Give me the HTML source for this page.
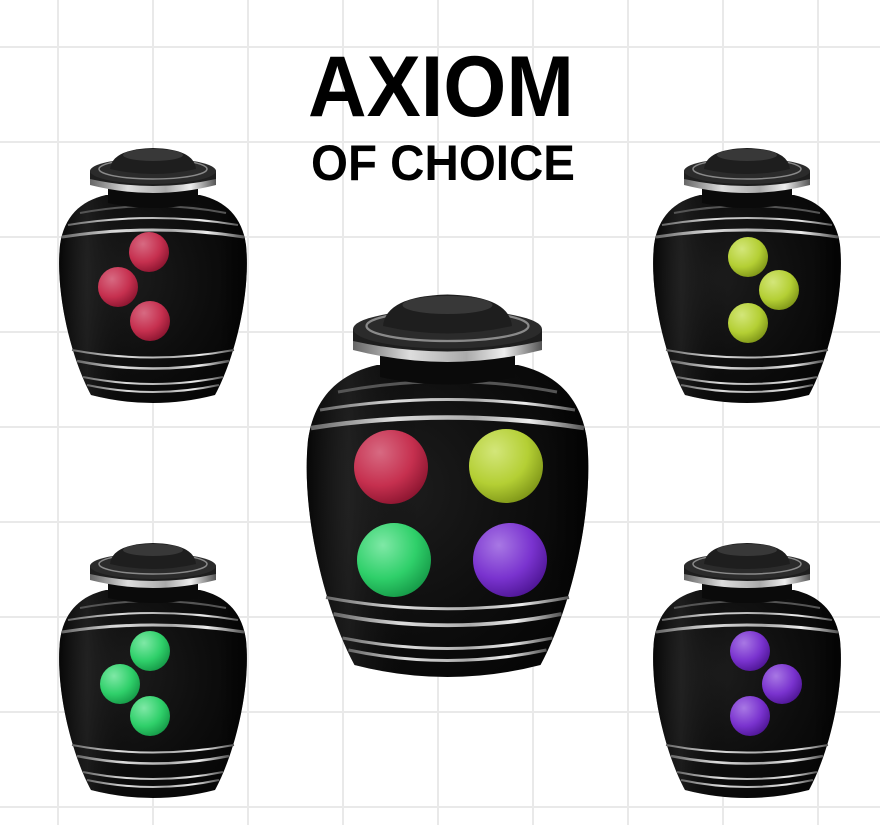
<!DOCTYPE html>
<html><head><style>
html,body{margin:0;padding:0;background:#fff;}
svg{display:block}
</style></head><body>
<svg width="880" height="825" viewBox="0 0 880 825" xmlns="http://www.w3.org/2000/svg">
<defs>
<radialGradient id="body" cx="0.35" cy="0.4" r="0.75">
<stop offset="0" stop-color="#1c1c1c"/><stop offset="0.6" stop-color="#0d0d0d"/><stop offset="1" stop-color="#050505"/>
</radialGradient>
<linearGradient id="bodyh" x1="0" x2="1" y1="0" y2="0">
<stop offset="0" stop-color="#000" stop-opacity="0.6"/><stop offset="0.15" stop-color="#333" stop-opacity="0.4"/><stop offset="0.4" stop-color="#000" stop-opacity="0"/><stop offset="0.85" stop-color="#000" stop-opacity="0"/><stop offset="1" stop-color="#000" stop-opacity="0.6"/>
</linearGradient>
<linearGradient id="silver" x1="0" x2="1">
<stop offset="0" stop-color="#666"/><stop offset="0.3" stop-color="#ddd"/><stop offset="0.6" stop-color="#aaa"/><stop offset="0.8" stop-color="#eee"/><stop offset="1" stop-color="#555"/>
</linearGradient>
<radialGradient id="red" cx="0.35" cy="0.3" r="0.75"><stop offset="0" stop-color="#d76a82"/><stop offset="0.6" stop-color="#c6304f"/><stop offset="1" stop-color="#8c1530"/></radialGradient>
<radialGradient id="yel" cx="0.35" cy="0.3" r="0.75"><stop offset="0" stop-color="#d3e67a"/><stop offset="0.6" stop-color="#b4cf34"/><stop offset="1" stop-color="#7f9618"/></radialGradient>
<radialGradient id="grn" cx="0.35" cy="0.3" r="0.75"><stop offset="0" stop-color="#7fe8a6"/><stop offset="0.6" stop-color="#2fd06a"/><stop offset="1" stop-color="#169a48"/></radialGradient>
<radialGradient id="pur" cx="0.35" cy="0.3" r="0.75"><stop offset="0" stop-color="#a878e4"/><stop offset="0.6" stop-color="#7a33cf"/><stop offset="1" stop-color="#4f1696"/></radialGradient>
<path id="bshape" d="M48 50 C22 56 6 72 2 100 C-3 150 14 215 33 250 Q95 266 157 250 C176 215 193 150 188 100 C184 72 168 56 142 50 Z"/>
<g id="urn">
<use href="#bshape" fill="url(#body)"/>
<use href="#bshape" fill="url(#bodyh)"/>
<g fill="none" stroke="url(#silver)" stroke-width="2">
<path d="M22 68 Q95 54 168 68" stroke="#555"/>
<path d="M10 80 Q95 66 180 80"/>
<path d="M4 92 Q95 78 186 92" stroke-width="3"/>
<path d="M14 205 Q95 220 176 205"/>
<path d="M19 216 Q95 231 171 216" stroke-width="2.5"/>
<path d="M25 232 Q95 246 165 232"/>
<path d="M29 240 Q95 254 161 240"/>
</g>
<path d="M50 40 L50 58 Q95 68 140 58 L140 40 Z" fill="#0a0a0a"/>
<path d="M32 30 L32 40 Q95 56 158 40 L158 30 Z" fill="url(#silver)"/>
<path d="M32 26 L32 34 Q95 48 158 34 L158 26 Z" fill="#1e1e1e"/>
<ellipse cx="95" cy="26" rx="63" ry="13" fill="#2b2b2b"/>
<ellipse cx="95" cy="24" rx="54" ry="10" fill="none" stroke="#8a8a8a" stroke-width="1.5"/>
<path d="M52 24 Q54 4 95 3 Q136 4 138 24 Q95 34 52 24 Z" fill="#1e1e1e"/>
<ellipse cx="95" cy="10" rx="30" ry="6" fill="#383838"/>
</g>
</defs>
<g stroke="#e9e9e9" stroke-width="2">
<line x1="58" y1="0" x2="58" y2="825"/><line x1="153" y1="0" x2="153" y2="825"/><line x1="248" y1="0" x2="248" y2="825"/><line x1="343" y1="0" x2="343" y2="825"/><line x1="438" y1="0" x2="438" y2="825"/><line x1="533" y1="0" x2="533" y2="825"/><line x1="628" y1="0" x2="628" y2="825"/><line x1="723" y1="0" x2="723" y2="825"/><line x1="818" y1="0" x2="818" y2="825"/>
<line x1="0" y1="47" x2="880" y2="47"/><line x1="0" y1="142" x2="880" y2="142"/><line x1="0" y1="237" x2="880" y2="237"/><line x1="0" y1="332" x2="880" y2="332"/><line x1="0" y1="427" x2="880" y2="427"/><line x1="0" y1="522" x2="880" y2="522"/><line x1="0" y1="617" x2="880" y2="617"/><line x1="0" y1="712" x2="880" y2="712"/><line x1="0" y1="807" x2="880" y2="807"/>
</g>
<text x="308" y="116" font-family="Liberation Sans, sans-serif" font-weight="bold" font-size="86" textLength="266" lengthAdjust="spacingAndGlyphs" fill="#000">AXIOM</text>
<text x="311" y="180" font-family="Liberation Sans, sans-serif" font-weight="bold" font-size="50" textLength="264" lengthAdjust="spacingAndGlyphs" fill="#000">OF CHOICE</text>

<g transform="translate(58,145)"><use href="#urn"/>
<circle cx="91" cy="107" r="20" fill="url(#red)"/><circle cx="60" cy="142" r="20" fill="url(#red)"/><circle cx="92" cy="176" r="20" fill="url(#red)"/></g>
<g transform="translate(652,145)"><use href="#urn"/>
<circle cx="96" cy="112" r="20" fill="url(#yel)"/><circle cx="127" cy="145" r="20" fill="url(#yel)"/><circle cx="96" cy="178" r="20" fill="url(#yel)"/></g>
<g transform="translate(58,540)"><use href="#urn"/>
<circle cx="92" cy="111" r="20" fill="url(#grn)"/><circle cx="62" cy="144" r="20" fill="url(#grn)"/><circle cx="92" cy="176" r="20" fill="url(#grn)"/></g>
<g transform="translate(652,540)"><use href="#urn"/>
<circle cx="98" cy="111" r="20" fill="url(#pur)"/><circle cx="130" cy="144" r="20" fill="url(#pur)"/><circle cx="98" cy="176" r="20" fill="url(#pur)"/></g>
<g transform="translate(305,290) scale(1.5)"><use href="#urn"/></g>
<circle cx="391" cy="467" r="37" fill="url(#red)"/>
<circle cx="506" cy="466" r="37" fill="url(#yel)"/>
<circle cx="394" cy="560" r="37" fill="url(#grn)"/>
<circle cx="510" cy="560" r="37" fill="url(#pur)"/>
</svg>
</body></html>
